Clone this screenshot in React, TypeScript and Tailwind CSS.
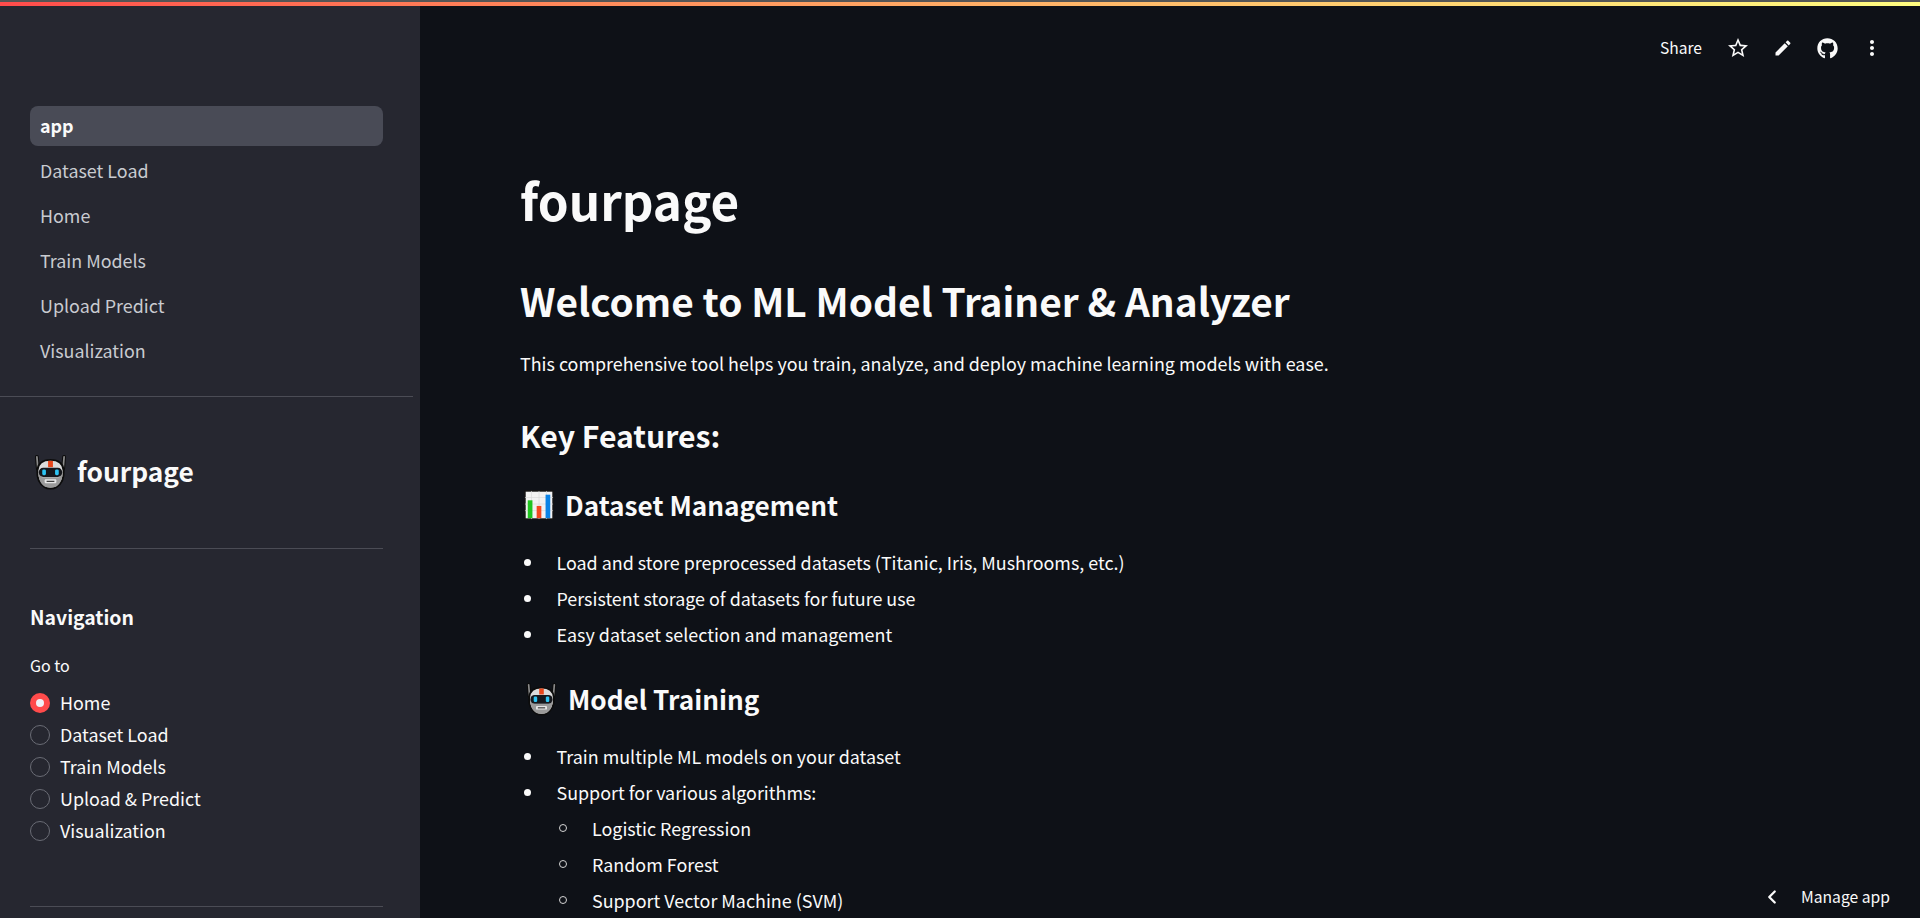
import { FaGithub } from "react-icons/fa";
import { ChevronLeft } from "lucide-react";

const font = { fontFamily: '"Noto Sans CJK SC", "Noto Sans", sans-serif' };

function Robot({ size }: { size: number }) {
  return (
    <svg width={size} height={size} viewBox="0 0 36 36" className="shrink-0">
      <path d="M4 2 L5 14 M32 2 L31 14" stroke="#0c0c0c" strokeWidth="4" strokeLinecap="round" fill="none" />
      <path d="M4 2 L5 14 M32 2 L31 14" stroke="#8a8a8a" strokeWidth="1.8" strokeLinecap="round" fill="none" />
      <path d="M18 5 C9 5 5 9 4.5 16 C4 24 7 30 12 33 C15 35 21 35 24 33 C29 30 32 24 31.5 16 C31 9 27 5 18 5 Z" fill="#dcdcdc" stroke="#0c0c0c" strokeWidth="2" />
      <path d="M5.5 17 C5.5 25 8 30 12 32.5 C15 34 21 34 24 32.5 C28 30 30.5 25 30.5 17 L27 23 L9 23 Z" fill="#9a9a9a" />
      <rect x="15.5" y="6" width="5" height="6.5" fill="#e8471c" />
      <rect x="6" y="13" width="24" height="9.5" rx="4.5" fill="#15171c" />
      <rect x="9.5" y="14.8" width="3.8" height="6" rx="1.4" fill="#2cc3f2" />
      <rect x="22.7" y="14.8" width="3.8" height="6" rx="1.4" fill="#2cc3f2" />
      <rect x="12" y="25" width="12" height="4" rx="1" fill="#e6e6e6" />
      <rect x="14" y="26.5" width="8" height="1.2" fill="#333" />
    </svg>
  );
}

function Chart({ size }: { size: number }) {
  return (
    <svg width={size} height={size} viewBox="0 0 32 32" className="shrink-0">
      <rect x="1" y="1" width="30" height="30" fill="#f2f2f2" stroke="#111" strokeWidth="1.6" />
      <path d="M1 8H31M1 15H31M1 22H31M8 1V31M16 1V31M24 1V31" stroke="#d9d9d9" strokeWidth="0.7" />
      <rect x="4" y="11" width="5" height="19" fill="#1fc41f" />
      <rect x="13.5" y="17" width="5" height="13" fill="#f4481f" />
      <rect x="23" y="5" width="5" height="25" fill="#0b83e6" />
    </svg>
  );
}

function Radio({ label, checked }: { label: string; checked?: boolean }) {
  return (
    <div className="flex h-8 items-center gap-[10px]">
      {checked ? (
        <span className="flex h-5 w-5 items-center justify-center rounded-full bg-[#ff4b4b]">
          <span className="h-2 w-2 rounded-full bg-[#f0f2f6]" />
        </span>
      ) : (
        <span className="h-5 w-5 rounded-full border border-[#6a6c75]" />
      )}
      <span className="pb-[2px] text-[17.9px] leading-[30px] text-[#fafafa]">{label}</span>
    </div>
  );
}

function Bullets({ items }: { items: string[] }) {
  return (
    <ul className="flex flex-col">
      {items.map((t) => (
        <li key={t} className="flex h-9 items-center gap-[25.5px] pl-[4px] text-[17.9px] leading-9 text-[#fafafa]">
          <span className="h-[7px] w-[7px] shrink-0 rounded-full bg-[#fafafa]" />
          {t}
        </li>
      ))}
    </ul>
  );
}

function Circles({ items }: { items: string[] }) {
  return (
    <ul className="flex flex-col">
      {items.map((t) => (
        <li key={t} className="flex h-9 items-center gap-[25px] pl-[39px] text-[17.9px] leading-9 text-[#fafafa]">
          <span className="h-2 w-2 shrink-0 rounded-full border border-[#d4d4d4]" />
          {t}
        </li>
      ))}
    </ul>
  );
}

export default function App() {
  return (
    <div className="flex h-[918px] w-full flex-col overflow-hidden bg-[#0e1117]" style={font}>
      <div className="h-[2px] shrink-0 bg-[#555]" />
      <div className="h-[4px] shrink-0 bg-gradient-to-r from-[#ff4b4b] to-[#fffd80]" />
      <div className="relative flex min-h-0 flex-1">
        <aside className="flex w-[420px] shrink-0 flex-col bg-[#262730] pt-[100px]">
          <nav className="flex flex-col gap-[5px] pr-[37px] pl-[30px] pb-[25px] text-[17.9px] text-[#c9cbd0]">
            <div className="flex h-10 items-center rounded-lg bg-[#494b56] px-[10px] pb-[1px] font-semibold text-[#fafafa]">app</div>
            <div className="flex h-10 items-center px-[10px] pb-[1px]">Dataset Load</div>
            <div className="flex h-10 items-center px-[10px] pb-[1px]">Home</div>
            <div className="flex h-10 items-center px-[10px] pb-[1px]">Train Models</div>
            <div className="flex h-10 items-center px-[10px] pb-[1px]">Upload Predict</div>
            <div className="flex h-10 items-center px-[10px] pb-[1px]">Visualization</div>
          </nav>
          <div className="mr-[7px] h-px shrink-0 bg-[#4b4c55]" />
          <div className="pr-[37px] pl-[30px]">
            <div className="mt-[54px] flex h-[42px] items-center gap-[9px]">
              <div className="ml-[3px]"><Robot size={35} /></div>
              <span className="pb-[2px] text-[26.3px] font-semibold leading-[40px] text-[#fafafa]">fourpage</span>
            </div>
            <div className="mt-[55px] h-px bg-[#4b4c55]" />
            <div className="mt-[53px] text-[19.4px] font-semibold leading-[30px] text-[#fafafa]">Navigation</div>
            <div className="mt-[23px] text-[16px] leading-5 text-[#fafafa]">Go to</div>
            <div className="mt-[12px] flex flex-col">
              <Radio label="Home" checked />
              <Radio label="Dataset Load" />
              <Radio label="Train Models" />
              <Radio label="Upload & Predict" />
              <Radio label="Visualization" />
            </div>
            <div className="mt-[59px] h-px bg-[#4b4c55]" />
          </div>
        </aside>
        <main className="min-w-0 flex-1 text-[#fafafa]">
          <header className="flex h-[84px] items-center justify-end pr-[36px]">
            <span className="mr-[24px] text-[15.6px]">Share</span>
            <svg viewBox="0 0 24 24" className="mr-[23px] h-6 w-6" fill="#fafafa"><path d="M22 9.24l-7.19-.62L12 2 9.19 8.63 2 9.24l5.46 4.73L5.82 21 12 17.27 18.18 21l-1.63-7.03L22 9.24zM12 15.4l-3.76 2.27 1-4.28-3.32-2.88 4.38-.38L12 6.1l1.71 4.04 4.38.38-3.32 2.88 1 4.28L12 15.4z" /></svg>
            <svg viewBox="0 0 24 24" className="mr-[24px] h-[20px] w-[20px]" fill="#fafafa"><path d="M3 17.25V21h3.75L17.81 9.94l-3.75-3.75L3 17.25zM20.71 7.04c.39-.39.39-1.02 0-1.41l-2.34-2.34c-.39-.39-1.02-.39-1.41 0l-1.83 1.83 3.75 3.75 1.83-1.83z" /></svg>
            <FaGithub className="mr-[22px] h-[21px] w-[21px] text-[#fafafa]" />
            <svg viewBox="0 0 24 24" className="h-6 w-6" fill="#fafafa"><path d="M12 8c1.1 0 2-.9 2-2s-.9-2-2-2-2 .9-2 2 .9 2 2 2zm0 2c-1.1 0-2 .9-2 2s.9 2 2 2 2-.9 2-2-.9-2-2-2zm0 6c-1.1 0-2 .9-2 2s.9 2 2 2 2-.9 2-2-.9-2-2-2z" /></svg>
          </header>
          <div className="pl-[100px]">
            <h1 className="mt-[76px] text-[49.4px] font-semibold leading-[68px]">fourpage</h1>
            <h2 className="mt-[39px] text-[38.8px] font-semibold leading-[54px]">Welcome to ML Model Trainer &amp; Analyzer</h2>
            <p className="mt-[22px] text-[17.9px] leading-7">This comprehensive tool helps you train, analyze, and deploy machine learning models with ease.</p>
            <h3 className="mt-[35px] text-[30.2px] font-semibold leading-[46px]">Key Features:</h3>
            <h4 className="mt-[25px] flex items-center gap-[11px] pl-[4px] text-[26.2px] font-semibold leading-[44px]"><Chart size={30} />Dataset Management</h4>
            <div className="mt-[17px]">
              <Bullets items={["Load and store preprocessed datasets (Titanic, Iris, Mushrooms, etc.)", "Persistent storage of datasets for future use", "Easy dataset selection and management"]} />
            </div>
            <h4 className="mt-[25px] flex items-center gap-[10px] pl-[5px] text-[26.2px] font-semibold leading-[44px]"><Robot size={33} />Model Training</h4>
            <div className="mt-[17px]">
              <Bullets items={["Train multiple ML models on your dataset", "Support for various algorithms:"]} />
              <Circles items={["Logistic Regression", "Random Forest", "Support Vector Machine (SVM)"]} />
            </div>
          </div>
        </main>
        <div className="absolute right-[30px] bottom-[9px] flex items-center gap-[18px] text-[#fafafa]">
          <ChevronLeft size={22} strokeWidth={2.5} />
          <span className="text-[15.7px] leading-6">Manage app</span>
        </div>
      </div>
    </div>
  );
}
